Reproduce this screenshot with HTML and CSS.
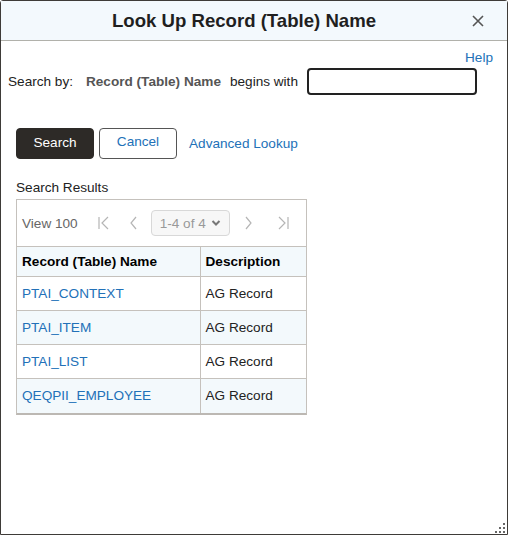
FILE: index.html
```html
<!DOCTYPE html>
<html lang="en">
<head>
    <meta charset="UTF-8">
    <meta name="viewport" content="width=device-width, initial-scale=1.0">
    <title>Look Up Record (Table) Name</title>
    <link rel="stylesheet" href="styles.css">
</head>
<body>
    <div class="lookup-dialog">
        <div class="lookup-header">
            <h1 class="lookup-title">Look Up Record (Table) Name</h1>
            <button class="lookup-close" type="button" aria-label="Close">
                <svg width="12" height="12" viewBox="0 0 12 12"><path d="M1 1L11 11M11 1L1 11" stroke="#555" stroke-width="1.6" fill="none"/></svg>
            </button>
        </div>
        <div class="lookup-body">
            <div class="help-row"><a class="lookup-link" href="#">Help</a></div>
            <div class="search-row">
                <span class="search-label">Search by:</span>
                <span class="search-field">Record (Table) Name</span>
                <span class="search-op">begins with</span>
                <input class="search-input" type="text">
            </div>
            <div class="lookup-btns">
                <button class="btn-primary" type="button">Search</button>
                <button class="btn-secondary" type="button">Cancel</button>
                <a class="lookup-link adv-link" href="#">Advanced Lookup</a>
            </div>
            <div class="results-title">Search Results</div>
            <div class="results-grid">
                <div class="grid-toolbar">
                    <span class="view-all">View 100</span>
                    <span class="nav-icon nav-first">
                        <svg width="14" height="16" viewBox="0 0 14 16"><path d="M2 2V14M11 2L5 8L11 14" stroke="#b5b5b5" stroke-width="1.2" fill="none"/></svg>
                    </span>
                    <span class="nav-icon nav-prev">
                        <svg width="10" height="16" viewBox="0 0 10 16"><path d="M8 2L3 8L8 14" stroke="#b5b5b5" stroke-width="1.2" fill="none"/></svg>
                    </span>
                    <span class="page-select">1-4 of 4
                        <svg width="10" height="8" viewBox="0 0 10 8"><path d="M1.5 2L5 5.5L8.5 2" stroke="#777" stroke-width="2" fill="none"/></svg>
                    </span>
                    <span class="nav-icon nav-next">
                        <svg width="10" height="16" viewBox="0 0 10 16"><path d="M2 2L7 8L2 14" stroke="#b5b5b5" stroke-width="1.2" fill="none"/></svg>
                    </span>
                    <span class="nav-icon nav-last">
                        <svg width="14" height="16" viewBox="0 0 14 16"><path d="M12 2V14M3 2L9 8L3 14" stroke="#b5b5b5" stroke-width="1.2" fill="none"/></svg>
                    </span>
                </div>
                <table class="results-table">
                    <thead>
                        <tr>
                            <th class="col-name">Record (Table) Name</th>
                            <th>Description</th>
                        </tr>
                    </thead>
                    <tbody>
                        <tr><td><a class="lookup-link" href="#">PTAI_CONTEXT</a></td><td>AG Record</td></tr>
                        <tr class="alt"><td><a class="lookup-link" href="#">PTAI_ITEM</a></td><td>AG Record</td></tr>
                        <tr><td><a class="lookup-link" href="#">PTAI_LIST</a></td><td>AG Record</td></tr>
                        <tr class="alt"><td><a class="lookup-link" href="#">QEQPII_EMPLOYEE</a></td><td>AG Record</td></tr>
                    </tbody>
                </table>
            </div>
        </div>
        <div class="resize-grip">
            <svg width="11" height="11" viewBox="0 0 11 11" fill="#666">
                <rect x="8" y="0" width="2" height="2"/>
                <rect x="4" y="4" width="2" height="2"/><rect x="8" y="4" width="2" height="2"/>
                <rect x="0" y="8" width="2" height="2"/><rect x="4" y="8" width="2" height="2"/><rect x="8" y="8" width="2" height="2"/>
            </svg>
        </div>
    </div>
</body>
</html>
```

FILE: styles.css
```css
* {
    box-sizing: border-box;
}
body {
    margin: 0;
    font-family: "Liberation Sans", Arial, sans-serif;
    font-size: 13.6px;
    color: #222;
    background: #fff;
}
.lookup-dialog {
    position: relative;
    width: 508px;
    height: 535px;
    border: 1px solid #3e3b38;
    border-radius: 3px 3px 0 0;
    background: #fff;
}
.lookup-header {
    position: relative;
    height: 40px;
    background: #f3f9fd;
    border-bottom: 1px solid #b1b1ab;
    padding-right: 20px;
    display: flex;
    align-items: center;
}
.lookup-title {
    flex: 1;
    margin: 0;
    text-align: center;
    font-size: 18.6px;
    font-weight: bold;
    color: #1f1f1f;
}
.lookup-close {
    position: absolute;
    right: 23px;
    top: 14px;
    padding: 0;
    border: none;
    background: none;
    width: 12px;
    height: 12px;
    line-height: 0;
}
.lookup-link {
    color: #2271b8;
    text-decoration: none;
}
.lookup-body {
    padding: 8px 14px 0 7px;
}
.help-row {
    text-align: right;
    height: 17px;
    line-height: 17px;
}
.search-row {
    display: flex;
    align-items: center;
    margin-top: 1px;
    height: 28px;
}
.search-label {
    margin-right: 13px;
}
.search-field {
    font-weight: bold;
    color: #555;
    margin-right: 9px;
}
.search-op {
    margin-right: 9px;
}
.search-input {
    width: 170px;
    height: 27px;
    border: 2px solid #222;
    border-radius: 4px;
    padding: 2px 6px;
    font: inherit;
}
.lookup-btns {
    display: flex;
    align-items: center;
    margin-top: 33px;
    padding-left: 8px;
}
.btn-primary,
.btn-secondary {
    height: 31px;
    border-radius: 4px;
    font: inherit;
    padding: 0 16px 2px;
    cursor: pointer;
}
.btn-primary {
    width: 78px;
    background: #2d2a27;
    border: 1px solid #2d2a27;
    color: #fff;
}
.btn-secondary {
    width: 78px;
    margin-left: 5px;
    background: #fff;
    border: 1px solid #555;
    color: #2271b8;
    padding-bottom: 4px;
}
.adv-link {
    margin-left: 12px;
}
.results-title {
    margin-top: 20px;
    padding-left: 8px;
    line-height: 17px;
}
.results-grid {
    margin-left: 8px;
    margin-top: 3px;
    width: 291px;
    border: 1px solid #c5c1bc;
    border-bottom: 2px solid #bcb8b3;
}
.grid-toolbar {
    display: flex;
    align-items: center;
    height: 46px;
    padding-left: 5px;
}
.view-all {
    color: #666;
    margin-right: 19px;
}
.nav-icon {
    display: flex;
    line-height: 0;
}
.nav-first {
    margin-right: 17px;
}
.nav-prev {
    margin-right: 13px;
}
.page-select {
    display: flex;
    align-items: center;
    gap: 5px;
    width: 79px;
    height: 26px;
    padding-left: 8px;
    border: 1px solid #d8d8d8;
    border-radius: 4px;
    background: #f7f7f7;
    color: #999;
    margin-right: 14px;
}
.nav-next {
    margin-right: 22px;
}
.results-table {
    width: 100%;
    border-collapse: collapse;
}
.results-table th,
.results-table td {
    text-align: left;
    padding: 0 5px;
    border-top: 1px solid #c5c1bc;
}
.results-table th {
    height: 30px;
    background: #f3f9fc;
    font-weight: bold;
    color: #000;
}
.results-table td {
    height: 34px;
    color: #222;
}
.results-table .col-name,
.results-table td:first-child {
    width: 183px;
    border-right: 1px solid #c5c1bc;
}
.results-table tr.alt td {
    background: #f3f9fc;
}
.resize-grip {
    position: absolute;
    right: 1px;
    bottom: 0;
    line-height: 0;
}
```
